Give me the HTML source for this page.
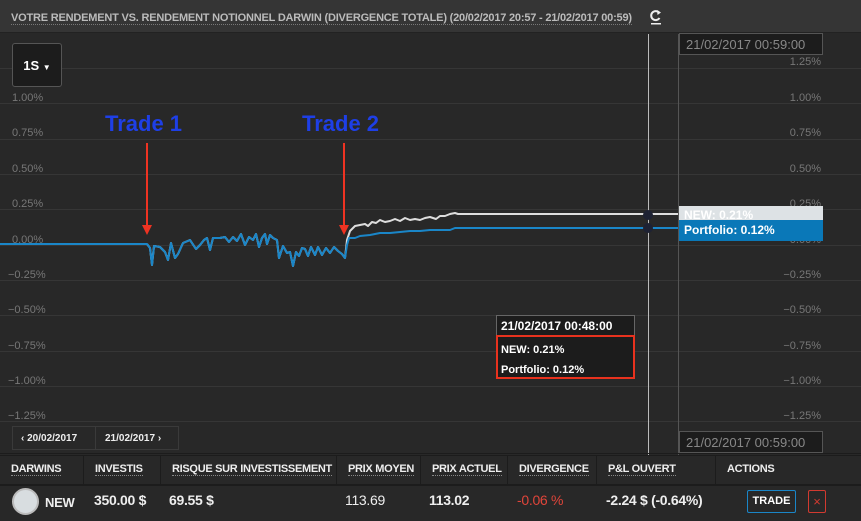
<!DOCTYPE html><html><head><style>
*{margin:0;padding:0;box-sizing:border-box}
body{width:861px;height:521px;background:#282828;font-family:"Liberation Sans",sans-serif;position:relative;overflow:hidden;color:#ddd}
.hdr{position:absolute;left:0;top:0;width:861px;height:33px;background:#353535;border-bottom:1px solid #222}
.hdr span{position:absolute;left:11px;top:12px;font-size:11px;font-weight:bold;color:#bbb;letter-spacing:-0.2px;border-bottom:1px dotted #777}
.lab{position:absolute;font-size:11px;color:#777}
.r{right:40px;text-align:right}
.btn{position:absolute;left:12px;top:43px;width:50px;height:44px;border:1px solid #555;border-radius:3px;background:#1c1c1c;color:#fff;font-weight:bold;font-size:13px;text-align:center;line-height:43px}
.tr{position:absolute;font-size:22px;font-weight:bold;color:#1e3fe6}
.box{position:absolute;background:#1c1c1c;border:1px solid #555;color:#888;font-size:13px}
.th{position:absolute;top:455px;height:29px;border-right:1px solid #1c1c1c;font-size:11px;font-weight:bold;color:#eee;padding:8px 0 0 11px;letter-spacing:-0.3px}
.th u{text-decoration:none;border-bottom:1px dotted #888}
.td{position:absolute;top:492px;font-size:14px;font-weight:bold;color:#eee;letter-spacing:-0.3px}
</style></head><body>
<div class="hdr"><span>VOTRE RENDEMENT VS. RENDEMENT NOTIONNEL DARWIN (DIVERGENCE TOTALE) (20/02/2017 20:57 - 21/02/2017 00:59)</span>
<svg style="position:absolute;left:649px;top:9px" width="14" height="16"><path d="M10 3.5A4.5 4.5 0 1 0 10.5 9" stroke="#eee" stroke-width="2" fill="none"/><path d="M8 1l4 2.5-3.5 2.5z" fill="#eee"/><rect x="2" y="14" width="10" height="1.5" fill="#eee"/></svg></div>
<svg style="position:absolute;left:0;top:0" width="861" height="455">
<g stroke="#363636" stroke-width="1">
<line x1="0" y1="68.5" x2="861" y2="68.5"/><line x1="0" y1="103.5" x2="861" y2="103.5"/><line x1="0" y1="139.5" x2="861" y2="139.5"/><line x1="0" y1="174.5" x2="861" y2="174.5"/><line x1="0" y1="209.5" x2="861" y2="209.5"/><line x1="0" y1="245.5" x2="861" y2="245.5"/><line x1="0" y1="280.5" x2="861" y2="280.5"/><line x1="0" y1="315.5" x2="861" y2="315.5"/><line x1="0" y1="351.5" x2="861" y2="351.5"/><line x1="0" y1="386.5" x2="861" y2="386.5"/><line x1="0" y1="421.5" x2="861" y2="421.5"/>
</g>
<line x1="648.5" y1="34" x2="648.5" y2="455" stroke="#bbb"/>
<line x1="678.5" y1="34" x2="678.5" y2="455" stroke="#555"/>
<line x1="0" y1="453.5" x2="861" y2="453.5" stroke="#1c1c1c"/>
<g fill="none" stroke-width="2" stroke-linejoin="round">
<polyline stroke="#ddd" points="147,244 150,248 152,265 154,246 160,247 165,252 168,260 171,243 175,258 178,254 183,243 190,240 196,249 200,245 204,240 207,238 210,250 213,238 220,238 225,237 229,242 233,237 237,241 241,234 245,245 249,237 253,240 256,234 259,247 262,238 265,234 267,244 270,235 273,238 277,240 279,258 283,246 287,253 290,252 293,266 296,252 299,256 302,248 305,249 308,256 311,247 315,255 318,247 322,255 326,248 330,253 334,247 338,251 342,254 345,258 347,240 350,231 355,226 360,225 365,224 368,226 372,222 376,223 380,220 385,222 390,221 395,219 400,221 405,218 410,220 415,219 420,220 425,218 430,217 436,219 440,216 445,216 450,214 455,213 458,214 678,214"/>
<polyline stroke="#1a86c8" points="0,244 147,244 150,248 152,265 154,246 160,247 165,252 168,260 171,243 175,258 178,254 183,243 190,240 196,249 200,245 204,240 207,238 210,250 213,238 220,238 225,237 229,242 233,237 237,241 241,234 245,245 249,237 253,240 256,234 259,247 262,238 265,234 267,244 270,235 273,238 277,240 279,258 283,246 287,253 290,252 293,266 296,252 299,256 302,248 305,249 308,256 311,247 315,255 318,247 322,255 326,248 330,253 334,247 338,251 342,254 345,258 347,245 349,238 355,238 360,236 370,235 380,233 390,233 400,232 410,231 420,231 430,230 440,230 450,230 455,228 460,228 678,228"/>
<line x1="147" y1="143" x2="147" y2="226" stroke="#ee3322" stroke-width="2"/><path d="M142 225h10l-5 10z" fill="#ee3322" stroke="none"/>
<line x1="344" y1="143" x2="344" y2="226" stroke="#ee3322" stroke-width="2"/><path d="M339 225h10l-5 10z" fill="#ee3322" stroke="none"/>
<circle cx="648" cy="215" r="5" fill="#1e2233" stroke="none"/><circle cx="648" cy="228" r="5" fill="#1e2233" stroke="none"/>
</g>
</svg>
<div class="btn">1S <span style="font-size:8px">▼</span></div>
<div class="lab" style="left:12px;top:92px">1.00%</div>
<div class="lab" style="left:12px;top:127px">0.75%</div>
<div class="lab" style="left:12px;top:163px">0.50%</div>
<div class="lab" style="left:12px;top:198px">0.25%</div>
<div class="lab" style="left:12px;top:234px">0.00%</div>
<div class="lab" style="left:8px;top:269px">−0.25%</div>
<div class="lab" style="left:8px;top:304px">−0.50%</div>
<div class="lab" style="left:8px;top:340px">−0.75%</div>
<div class="lab" style="left:8px;top:375px">−1.00%</div>
<div class="lab" style="left:8px;top:410px">−1.25%</div>
<div class="lab r" style="top:56px">1.25%</div>
<div class="lab r" style="top:92px">1.00%</div>
<div class="lab r" style="top:127px">0.75%</div>
<div class="lab r" style="top:163px">0.50%</div>
<div class="lab r" style="top:198px">0.25%</div>
<div class="lab r" style="top:234px">0.00%</div>
<div class="lab r" style="top:269px">−0.25%</div>
<div class="lab r" style="top:304px">−0.50%</div>
<div class="lab r" style="top:340px">−0.75%</div>
<div class="lab r" style="top:375px">−1.00%</div>
<div class="lab r" style="top:410px">−1.25%</div>
<div class="tr" style="left:105px;top:111px">Trade 1</div>
<div class="tr" style="left:302px;top:111px">Trade 2</div>
<div class="box" style="left:679px;top:33px;width:144px;height:22px;padding:3px 0 0 6px">21/02/2017 00:59:00</div>
<div class="box" style="left:679px;top:431px;width:144px;height:22px;padding:3px 0 0 6px">21/02/2017 00:59:00</div>
<div style="position:absolute;left:679px;top:206px;width:144px;height:14px;background:#dde2e5;color:#fff;font-size:12px;font-weight:bold;padding:2px 0 0 5px">NEW: 0.21%</div>
<div style="position:absolute;left:679px;top:220px;width:144px;height:21px;background:#0a78b8;color:#fff;font-size:12px;font-weight:bold;padding:3px 0 0 5px">Portfolio: 0.12%</div>
<div style="position:absolute;left:496px;top:315px;width:139px;height:21px;background:#1c1c1c;border:1px solid #666;color:#fff;font-size:12px;font-weight:bold;padding:3px 0 0 4px">21/02/2017 00:48:00</div>
<div style="position:absolute;left:496px;top:335px;width:139px;height:44px;background:#1c1c1c;border:2px solid #e8321e;color:#fff;font-size:11px;font-weight:bold;padding:3px 0 0 3px;line-height:20px">NEW: 0.21%<br>Portfolio: 0.12%</div>
<div style="position:absolute;left:12px;top:426px;width:84px;height:24px;border:1px solid #3a3a3a;font-size:10px;font-weight:bold;color:#eee;padding:6px 0 0 8px">‹ 20/02/2017</div>
<div style="position:absolute;left:95px;top:426px;width:84px;height:24px;border:1px solid #3a3a3a;font-size:10px;font-weight:bold;color:#eee;padding:6px 0 0 9px">21/02/2017 ›</div>
<div style="position:absolute;left:0;top:455px;width:861px;height:66px;background:#282828;border-top:1px solid #1c1c1c"></div>
<div style="position:absolute;left:0;top:484px;width:861px;height:2px;background:#1c1c1c"></div>
<div class="th" style="left:0;width:84px"><u>DARWINS</u></div>
<div class="th" style="left:84px;width:77px"><u>INVESTIS</u></div>
<div class="th" style="left:161px;width:176px"><u>RISQUE SUR INVESTISSEMENT</u></div>
<div class="th" style="left:337px;width:84px"><u>PRIX MOYEN</u></div>
<div class="th" style="left:421px;width:87px"><u>PRIX ACTUEL</u></div>
<div class="th" style="left:508px;width:89px"><u>DIVERGENCE</u></div>
<div class="th" style="left:597px;width:119px"><u>P&amp;L OUVERT</u></div>
<div class="th" style="left:716px;width:145px;border:none">ACTIONS</div>
<div style="position:absolute;left:12px;top:488px;width:27px;height:27px;border-radius:50%;background:#d8dde0;border:2px solid #bbb"></div>
<div class="td" style="left:45px;top:495px;font-size:13px">NEW</div>
<div class="td" style="left:94px">350.00 $</div>
<div class="td" style="left:169px">69.55 $</div>
<div class="td" style="left:345px;font-weight:normal">113.69</div>
<div class="td" style="left:429px">113.02</div>
<div class="td" style="left:517px;color:#e0453a;font-weight:normal">-0.06 %</div>
<div class="td" style="left:606px">-2.24 $ (-0.64%)</div>
<div style="position:absolute;left:747px;top:490px;width:49px;height:23px;border:1px solid #1a86c8;border-radius:2px;color:#fff;font-size:11px;font-weight:bold;text-align:center;line-height:21px">TRADE</div>
<div style="position:absolute;left:808px;top:490px;width:18px;height:23px;border:1px solid #d23a30;border-radius:2px;color:#d23a30;font-size:13px;text-align:center;line-height:21px">×</div>
</body></html>
